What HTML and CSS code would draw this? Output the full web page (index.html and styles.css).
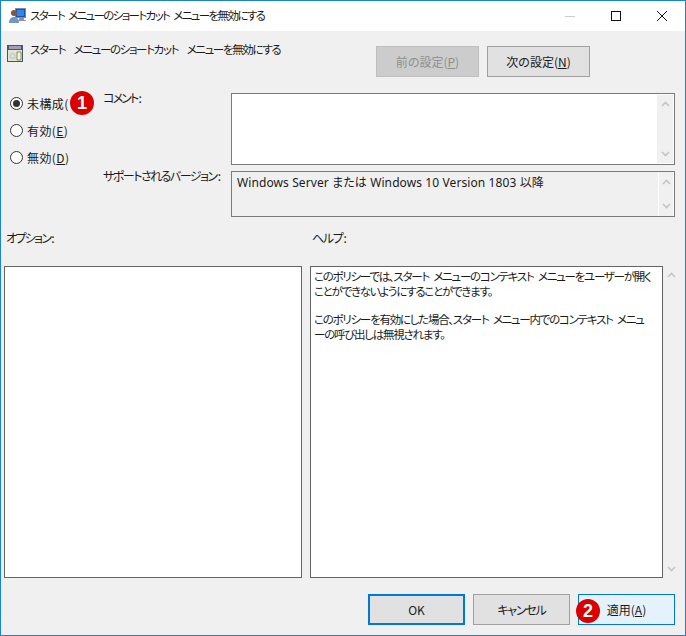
FILE: index.html
```html
<!DOCTYPE html>
<html lang="ja">
<head>
    <meta charset="UTF-8">
    <title>スタート メニューのショートカット メニューを無効にする</title>
    <link rel="stylesheet" href="styles.css">
</head>
<body>
    <div class="window">
        <div class="titlebar">
            <svg class="app-icon" width="17" height="16" viewBox="0 0 17 16">
                <rect x="6.500" y="0.500" width="10" height="9" fill="#1f4fb4" stroke="#7a8aa8"/>
                <path d="M8 2h7v6H8z" fill="#2f86ea"/>
                <path d="M10 10h5v2h2v1H9v-1h1z" fill="#8f949c"/>
                <circle cx="5" cy="5" r="3" fill="#7a5a42"/>
                <path d="M0 15c0-4 2-6 5-6s5 2 5 6z" fill="#6f97c6"/>
            </svg>
            <span class="title-text">スタート メニューのショートカット メニューを無効にする</span>
            <div class="caption">
                <div class="caption-btn"><span class="cap-min"></span></div>
                <div class="caption-btn"><span class="cap-max"></span></div>
                <div class="caption-btn">
                    <svg width="12" height="12" viewBox="0 0 12 12"><path d="M1 1l10 10M11 1L1 11" stroke="#111" fill="none"/></svg>
                </div>
            </div>
        </div>

        <div class="content">
            <div class="policy-head">
                <svg class="policy-icon" width="16" height="17" viewBox="0 0 16 17">
                    <rect width="16" height="17" fill="#3f5a62"/>
                    <rect x="2" y="1" width="12" height="3" fill="#a39cc0"/>
                    <rect x="1" y="5" width="14" height="11" fill="#e9e4c4"/>
                    <circle cx="5.500" cy="11" r="3.500" fill="#c6d2dc"/>
                    <circle cx="5.500" cy="11" r="1" fill="#f4f4f4"/>
                    <path d="M10 7h4v8h-4z" fill="#f6f2d8" stroke="#56684e" stroke-width="0.700"/>
                </svg>
                <span class="policy-name">スタート&nbsp; メニューのショートカット&nbsp; メニューを無効にする</span>
                <div class="nav-btns">
                    <div class="btn btn-disabled"><span>前の設定(<u>P</u>)</span></div>
                    <div class="btn"><span>次の設定(<u>N</u>)</span></div>
                </div>
            </div>

            <div class="settings">
                <div class="radios">
                    <div class="radio-row">
                        <span class="radio radio-on"></span>
                        <span class="radio-text">未構成(</span>
                        <span class="badge badge-one">1</span>
                    </div>
                    <div class="radio-row">
                        <span class="radio"></span>
                        <span class="radio-text">有効(<u>E</u>)</span>
                    </div>
                    <div class="radio-row">
                        <span class="radio"></span>
                        <span class="radio-text">無効(<u>D</u>)</span>
                    </div>
                </div>
                <div class="fields">
                    <div class="field">
                        <div class="field-label label-comment">コメント<span class="colon">:</span></div>
                        <div class="box box-comment">
                            <div class="box-body"></div>
                            <div class="scroll scroll-comment">
                                <svg width="9" height="6" viewBox="0 0 9 6"><path d="M1 5l3.500-3.500L8 5" class="chev"/></svg>
                                <svg width="9" height="6" viewBox="0 0 9 6"><path d="M1 1l3.500 3.500L8 1" class="chev"/></svg>
                            </div>
                        </div>
                    </div>
                    <div class="field">
                        <div class="field-label label-support">サポートされるバージョン<span class="colon">:</span></div>
                        <div class="box box-support">
                            <div class="box-body support-text">Windows Server または Windows 10 Version 1803 以降</div>
                            <div class="scroll scroll-support">
                                <svg width="9" height="6" viewBox="0 0 9 6"><path d="M1 5l3.500-3.500L8 5" class="chev"/></svg>
                                <svg width="9" height="6" viewBox="0 0 9 6"><path d="M1 1l3.500 3.500L8 1" class="chev"/></svg>
                            </div>
                        </div>
                    </div>
                </div>
            </div>

            <div class="panel-labels">
                <div class="label-options">オプション<span class="colon">:</span></div>
                <div class="label-help">ヘルプ<span class="colon">:</span></div>
            </div>

            <div class="panels">
                <div class="panel panel-options"></div>
                <div class="panel panel-help">
                    <p>このポリシーでは、スタート メニューのコンテキスト メニューをユーザーが開く<br>ことができないようにすることができます。</p>
                    <p>このポリシーを有効にした場合、スタート メニュー内でのコンテキスト メニュ<br>ーの呼び出しは無視されます。</p>
                </div>
                <div class="scroll scroll-help">
                    <svg width="9" height="6" viewBox="0 0 9 6"><path d="M1 5l3.500-3.500L8 5" class="chev"/></svg>
                    <svg width="9" height="6" viewBox="0 0 9 6"><path d="M1 1l3.500 3.500L8 1" class="chev"/></svg>
                </div>
            </div>

            <div class="footer">
                <div class="btn btn-default"><span>OK</span></div>
                <div class="btn"><span class="cancel-text">キャンセル</span></div>
                <div class="btn btn-hover">
                    <span class="badge badge-two">2</span>
                    <span>適用(<u>A</u>)</span>
                </div>
            </div>
        </div>
    </div>
</body>
</html>
```

FILE: styles.css
```css
html, body {
    margin: 0;
    padding: 0;
}

body {
    font-family: "Noto Sans CJK JP", "Noto Sans", sans-serif;
    font-size: 12px;
    line-height: 15px;
    font-feature-settings: "palt";
    color: #1a1a1a;
    background: #f0f0f0;
}

.window {
    width: 686px;
    height: 636px;
    box-sizing: border-box;
    border: 1px solid #1883d7;
    background: #f0f0f0;
    display: flex;
    flex-direction: column;
}

.titlebar {
    height: 30px;
    flex: none;
    background: white;
    display: flex;
    align-items: center;
    padding-left: 8px;
}

.app-icon {
    margin-right: 4px;
}

.title-text {
    flex: 1;
    margin-top: -1px;
    font-size: 11.500px;
    letter-spacing: -1.620px;
    word-spacing: 3px;
}

.caption {
    display: flex;
}

.caption-btn {
    width: 46px;
    height: 30px;
    display: flex;
    align-items: center;
    justify-content: center;
}

.cap-min {
    width: 10px;
    height: 1px;
    background: #ccc;
}

.cap-max {
    width: 8px;
    height: 8px;
    border: 1px solid #111;
}

.content {
    flex: 1;
    display: flex;
    flex-direction: column;
    min-height: 0;
}

.policy-head {
    height: 62px;
    flex: none;
    display: flex;
    align-items: flex-start;
    padding-left: 6px;
}

.policy-icon {
    margin-top: 14px;
    margin-right: 7px;
}

.policy-name {
    flex: 1;
    margin-top: 11px;
    font-size: 11.500px;
    letter-spacing: -1.350px;
    word-spacing: 3px;
}

.nav-btns {
    display: flex;
    gap: 8px;
    margin-top: 15px;
    margin-right: 95px;
}

.btn {
    width: 103px;
    height: 31px;
    box-sizing: border-box;
    border: 1px solid #a0a0a0;
    background: #e1e1e1;
    display: flex;
    align-items: center;
    justify-content: center;
    position: relative;
}

.btn-disabled {
    background: #cccccc;
    border-color: #bfbfbf;
    color: #8f8f8f;
}

.settings {
    display: flex;
    flex: none;
}

.radios {
    width: 102px;
    flex: none;
    padding-left: 9px;
    margin-top: -3px;
    box-sizing: border-box;
}

.radio-row {
    height: 27px;
    display: flex;
    align-items: center;
    position: relative;
    width: fit-content;
}

.radio {
    width: 11px;
    height: 11px;
    border: 1px solid #333;
    border-radius: 50%;
    background: white;
    margin-right: 4px;
    position: relative;
}

.radio-on::after {
    content: "";
    position: absolute;
    left: 2px;
    top: 2px;
    width: 7px;
    height: 7px;
    border-radius: 50%;
    background: #333;
}

.radio-text {
    letter-spacing: 0.400px;
}

.badge {
    width: 24px;
    height: 24px;
    border-radius: 50%;
    background: #d90000;
    color: white;
    font-family: "Liberation Sans", sans-serif;
    font-size: 18px;
    font-weight: bold;
    display: flex;
    align-items: center;
    justify-content: center;
    position: absolute;
}

.badge-one {
    left: 60px;
    top: 1px;
}

.badge-two {
    left: -3px;
    top: 4px;
}

.fields {
    flex: 1;
    display: flex;
    flex-direction: column;
    gap: 6px;
}

.field {
    display: flex;
}

.field-label {
    width: 128px;
    height: 15px;
    flex: none;
    white-space: nowrap;
    margin-top: -3px;
}

.label-comment {
    letter-spacing: -1.800px;
}

.label-support {
    letter-spacing: -1.500px;
}

/* the tight kana spacing would run into the colon */
.colon {
    margin-left: 1px;
    letter-spacing: 0;
}

.box {
    width: 444px;
    box-sizing: border-box;
    border: 1px solid #7a7a7a;
    display: flex;
}

.box-comment {
    height: 72px;
    background: white;
}

.box-support {
    height: 46px;
    background: #f0f0f0;
}

.box-body {
    flex: 1;
}

.support-text {
    padding: 3px 5px;
    font-family: "Noto Sans", "Noto Sans CJK JP", sans-serif;
    letter-spacing: 0.100px;
}

.scroll {
    width: 16px;
    flex: none;
    display: flex;
    flex-direction: column;
    align-items: center;
    justify-content: space-between;
    box-sizing: border-box;
}

.scroll-comment {
    background: #f0f0f0;
    margin: 1px;
    padding: 6px 0;
}

.scroll-support {
    border-left: 1px solid white;
    border-right: 1px solid white;
    padding: 7px 0;
}

.chev {
    fill: none;
    stroke: #c4c4c4;
    stroke-width: 1.600;
}

.panel-labels {
    display: flex;
    height: 49px;
    flex: none;
    padding-top: 13px;
    box-sizing: border-box;
}

.label-options {
    width: 311px;
    padding-left: 5px;
    box-sizing: border-box;
    letter-spacing: -1.700px;
}

.label-help {
    letter-spacing: -1.300px;
}

.panels {
    display: flex;
    flex: none;
    height: 312px;
    padding-left: 3px;
}

.panel {
    box-sizing: border-box;
    border: 1px solid #646464;
    background: white;
    height: 100%;
}

.panel-options {
    width: 298px;
    margin-right: 8px;
}

.panel-help {
    width: 353px;
    padding: 2px 3px;
    font-size: 11.500px;
    letter-spacing: -1.250px;
    word-spacing: 3px;
    white-space: nowrap;
}

.panel-help p {
    margin: 0 0 13px;
}

.scroll-help {
    width: 17px;
    padding: 6px 0;
}

.footer {
    flex: 1;
    display: flex;
    justify-content: flex-end;
    gap: 8px;
    padding: 16px 10px 0 0;
}

.footer .btn {
    width: 97px;
}

.cancel-text {
    letter-spacing: -1.200px;
}

.btn-default {
    border: 2px solid #0078d7;
}

.btn-hover {
    border: 1px solid #0078d7;
    background: #e5f1fb;
}
```
